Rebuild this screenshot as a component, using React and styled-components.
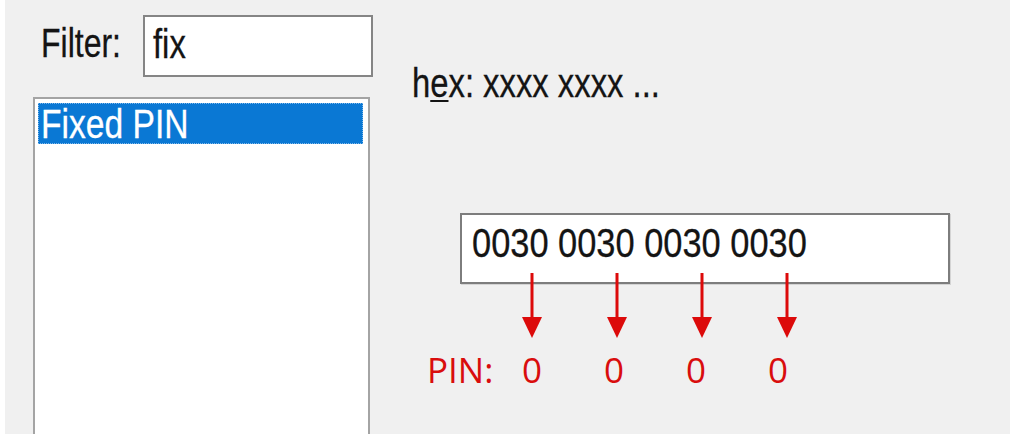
import React from 'react';
import styled, { createGlobalStyle } from 'styled-components';

const GlobalStyle = createGlobalStyle`
  html, body {
    margin: 0;
    padding: 0;
    background: #ffffff;
  }
`;

const digitGroups = ['0030', '0030', '0030', '0030'];
const pinDigits = ['0', '0', '0', '0'];

function App() {
  return (
    <>
      <GlobalStyle />
      <Panel>
        <LeftPane>
          <FilterRow>
            <FilterLabel>
              <WinText $sx={0.8}>Filter:</WinText>
            </FilterLabel>
            <FilterInput>
              <WinText $sx={0.82}>fix</WinText>
            </FilterInput>
          </FilterRow>
          <ListBox>
            <ListItem $selected>
              <WinText $sx={0.84}>Fixed PIN</WinText>
            </ListItem>
          </ListBox>
        </LeftPane>

        <RightPane>
          <HexHint>
            <WinText $sx={0.82}>
              h<Mnemonic>e</Mnemonic>x: xxxx xxxx ...
            </WinText>
          </HexHint>

          <HexBox>
            <WinText $sx={0.86}>{digitGroups.join(' ')}</WinText>
          </HexBox>

          <ArrowRow>
            {digitGroups.map((g, i) => (
              <DownArrow key={i} />
            ))}
          </ArrowRow>

          <PinRow>
            <PinLabel>PIN:</PinLabel>
            {pinDigits.map((d, i) => (
              <PinDigit key={i}>{d}</PinDigit>
            ))}
          </PinRow>
        </RightPane>
      </Panel>
    </>
  );
}

// red annotation arrow pointing from a hex group to its pin digit
const DownArrow = () => (
  <ArrowSvg width="20" height="65" viewBox="0 0 20 65">
    <line x1="10" y1="0" x2="10" y2="46" stroke="#dc0a0a" strokeWidth="3" />
    <polygon points="0,44 20,44 10,65" fill="#dc0a0a" />
  </ArrowSvg>
);

const Panel = styled.div`
  display: flex;
  width: 1005px;
  height: 434px;
  margin-left: 5px;
  background: #f0f0f0;
  overflow: visible;
`;

const LeftPane = styled.div`
  display: flex;
  flex-direction: column;
  width: 350px;
  padding-left: 28px;
`;

const WinText = styled.span`
  display: inline-block;
  font-family: 'Liberation Sans', Arial, sans-serif;
  font-size: 40px;
  line-height: 40px;
  color: #141414;
  -webkit-text-stroke: 0.3px currentColor;
  white-space: pre;
  transform: scaleX(${(p) => p.$sx || 0.83});
  transform-origin: left center;
`;

const FilterRow = styled.div`
  display: flex;
  align-items: flex-start;
  margin-top: 15px;
  padding-left: 8px;
`;

const FilterLabel = styled.div`
  width: 102px;
  padding-top: 8px;
`;

const FilterInput = styled.div`
  box-sizing: border-box;
  width: 230px;
  height: 62px;
  padding: 7px 8px 0;
  background: #ffffff;
  border: 2px solid #858585;
`;

const ListBox = styled.div`
  box-sizing: border-box;
  flex: none;
  width: 337px;
  height: 341px;
  margin-top: 20px;
  padding: 4px 5px 0 3px;
  background: #ffffff;
  border: 2px solid #a4a4a4;
  border-bottom: none;
`;

const ListItem = styled.div`
  box-sizing: border-box;
  height: 41px;
  padding-left: 2px;
  background: ${(p) => (p.$selected ? '#0a78d4' : 'transparent')};
  border: 1px dotted ${(p) => (p.$selected ? '#7fb8ea' : 'transparent')};

  ${WinText} {
    color: ${(p) => (p.$selected ? '#ffffff' : '#141414')};
  }
`;

const RightPane = styled.div`
  display: flex;
  flex-direction: column;
  flex: 1;
  padding-top: 63px;
`;

const HexHint = styled.div`
  margin-left: 29px;
`;

const Mnemonic = styled.span`
  text-decoration: underline;
  text-decoration-thickness: 2px;
  text-underline-offset: 3px;
`;

const HexBox = styled.div`
  box-sizing: border-box;
  width: 490px;
  height: 71px;
  margin-top: 110px;
  margin-left: 77px;
  padding: 8px 10px 0;
  background: #ffffff;
  border: 2px solid #7d7d7d;
  box-shadow: 1px 1px 0 #d4d4d4;
`;

const ArrowRow = styled.div`
  display: flex;
  gap: 65px;
  height: 65px;
  margin-top: -11px;
  margin-left: 139px;
`;

const ArrowSvg = styled.svg`
  display: block;
  flex: none;
`;

const PinRow = styled.div`
  display: flex;
  margin-top: 14px;
  margin-left: 44px;
  font-family: 'Open Sans', 'Liberation Sans', sans-serif;
  font-size: 35px;
  line-height: 35px;
  color: #d90d0d;
`;

const PinLabel = styled.div`
  width: 64px;
`;

const PinDigit = styled.div`
  width: 82px;
  text-align: center;
`;

export default App;
